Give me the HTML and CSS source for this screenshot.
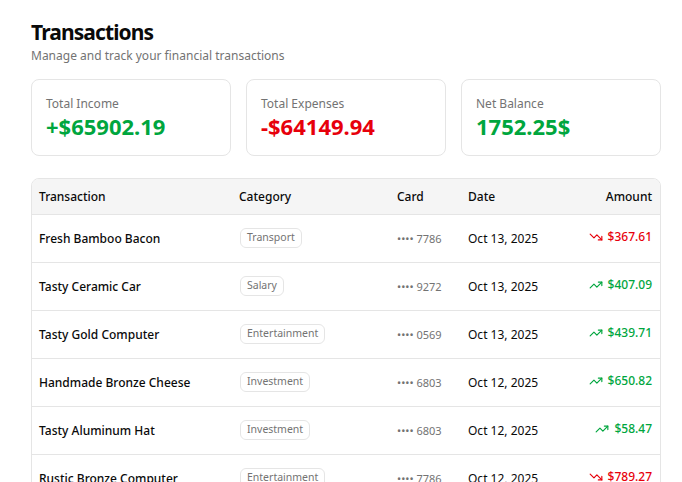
FILE: index.html
```html
<!DOCTYPE html>
<html>
<head>
<meta charset="utf-8">
<link rel="stylesheet" href="styles.css">
</head>
<body>
<div class="page">
  <header class="head">
    <h1 class="title">Transactions</h1>
    <p class="subtitle">Manage and track your financial transactions</p>
  </header>
  <section class="stats">
    <div class="stat">
      <div class="stat-label">Total Income</div>
      <div class="stat-value pos">+$65902.19</div>
    </div>
    <div class="stat">
      <div class="stat-label">Total Expenses</div>
      <div class="stat-value neg">-$64149.94</div>
    </div>
    <div class="stat">
      <div class="stat-label">Net Balance</div>
      <div class="stat-value pos">1752.25$</div>
    </div>
  </section>
  <div class="table-wrap">
    <table class="tx">
      <colgroup>
        <col class="c1"><col class="c2"><col class="c3"><col class="c4"><col class="c5">
      </colgroup>
      <thead>
        <tr><th>Transaction</th><th>Category</th><th>Card</th><th>Date</th><th class="right">Amount</th></tr>
      </thead>
      <tbody>
        <tr><td class="name">Fresh Bamboo Bacon</td><td><span class="badge">Transport</span></td><td class="card">•••• 7786</td><td>Oct 13, 2025</td>
          <td class="right"><span class="amt neg"><svg class="ic" viewBox="0 0 24 24"><polyline points="22 17 13.5 8.5 8.5 13.5 2 7"/><polyline points="16 17 22 17 22 11"/></svg>$367.61</span></td></tr>
        <tr><td class="name">Tasty Ceramic Car</td><td><span class="badge">Salary</span></td><td class="card">•••• 9272</td><td>Oct 13, 2025</td>
          <td class="right"><span class="amt pos"><svg class="ic" viewBox="0 0 24 24"><polyline points="22 7 13.5 15.5 8.5 10.5 2 17"/><polyline points="16 7 22 7 22 13"/></svg>$407.09</span></td></tr>
        <tr><td class="name">Tasty Gold Computer</td><td><span class="badge">Entertainment</span></td><td class="card">•••• 0569</td><td>Oct 13, 2025</td>
          <td class="right"><span class="amt pos"><svg class="ic" viewBox="0 0 24 24"><polyline points="22 7 13.5 15.5 8.5 10.5 2 17"/><polyline points="16 7 22 7 22 13"/></svg>$439.71</span></td></tr>
        <tr><td class="name">Handmade Bronze Cheese</td><td><span class="badge">Investment</span></td><td class="card">•••• 6803</td><td>Oct 12, 2025</td>
          <td class="right"><span class="amt pos"><svg class="ic" viewBox="0 0 24 24"><polyline points="22 7 13.5 15.5 8.5 10.5 2 17"/><polyline points="16 7 22 7 22 13"/></svg>$650.82</span></td></tr>
        <tr><td class="name">Tasty Aluminum Hat</td><td><span class="badge">Investment</span></td><td class="card">•••• 6803</td><td>Oct 12, 2025</td>
          <td class="right"><span class="amt pos"><svg class="ic" viewBox="0 0 24 24"><polyline points="22 7 13.5 15.5 8.5 10.5 2 17"/><polyline points="16 7 22 7 22 13"/></svg>$58.47</span></td></tr>
        <tr><td class="name">Rustic Bronze Computer</td><td><span class="badge">Entertainment</span></td><td class="card">•••• 7786</td><td>Oct 12, 2025</td>
          <td class="right"><span class="amt neg"><svg class="ic" viewBox="0 0 24 24"><polyline points="22 17 13.5 8.5 8.5 13.5 2 7"/><polyline points="16 17 22 17 22 11"/></svg>$789.27</span></td></tr>
      </tbody>
    </table>
  </div>
</div>
</body>
</html>
```
FILE: styles.css
```css
* { box-sizing: border-box; }
html, body { margin: 0; padding: 0; background: #fff; }
body {
  font-family: "Noto Sans", "Open Sans", sans-serif;
  color: #0a0a0a;
  overflow: hidden;
}
.page {
  width: 630px;
  margin-left: 31px;
  padding-top: 17px;
}
.title {
  margin: 0;
  font-size: 21px;
  line-height: 30px;
  font-weight: 700;
  letter-spacing: -0.9px;
}
.subtitle {
  margin: 0;
  font-size: 12px;
  line-height: 18px;
  color: #737373;
}
.stats {
  display: grid;
  grid-template-columns: repeat(3, 1fr);
  gap: 15px;
  margin-top: 14px;
}
.stat {
  border: 1px solid #e5e5e5;
  border-radius: 8px;
  padding: 15px 14px;
  height: 77px;
}
.stat-label {
  font-size: 12px;
  line-height: 18px;
  color: #737373;
}
.stat-value {
  font-size: 22px;
  line-height: 27px;
  font-weight: 700;
}
.pos { color: #00a63e; }
.neg { color: #e7000b; }
.table-wrap {
  margin-top: 22px;
  border: 1px solid #e5e5e5;
  border-radius: 8px;
  overflow: hidden;
}
.tx {
  width: 100%;
  border-collapse: collapse;
  table-layout: fixed;
  font-size: 12px;
}
.c1 { width: 200px; }
.c2 { width: 158px; }
.c3 { width: 71px; }
.c4 { width: 100px; }
.c5 { width: 99px; }
.tx th {
  background: #f5f5f5;
  height: 35px;
  padding: 0 7px;
  text-align: left;
  font-weight: 500;
  border-bottom: 1px solid #e5e5e5;
}
.tx td {
  height: 48px;
  padding: 0 7px;
  border-bottom: 1px solid #e5e5e5;
  white-space: nowrap;
}
.tx .right { text-align: right; padding-right: 8px; }
.name { font-weight: 500; }
.tx td:nth-child(2) { padding-left: 8px; }
.badge {
  display: inline-block;
  font-size: 10.5px;
  line-height: 15px;
  padding: 1px 6px 2px;
  border: 1px solid #e5e5e5;
  border-radius: 6px;
  color: #737373;
}
.card { font-size: 11px; color: #737373; }
.amt {
  display: inline-flex;
  align-items: center;
  gap: 5px;
  font-weight: 500;
}
.ic {
  width: 14px;
  height: 14px;
  fill: none;
  stroke: currentColor;
  stroke-width: 2;
  stroke-linecap: round;
  stroke-linejoin: round;
}
```
